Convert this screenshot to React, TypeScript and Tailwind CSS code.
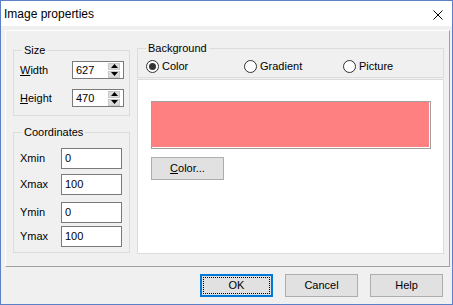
import React from "react";

function cn(...parts: Array<string | false | undefined | null>) {
  return parts.filter(Boolean).join(" ");
}

function Spin() {
  return (
    <div className="flex flex-col gap-[1px] mr-[3px]">
      <div className="w-[12px] h-[7px] bg-[#dcdcdc] border border-[#c8c8c8] flex items-center justify-center">
        <svg width="7" height="4" viewBox="0 0 7 4">
          <path d="M3.5 0 L7 4 L0 4 Z" fill="#000" />
        </svg>
      </div>
      <div className="w-[12px] h-[7px] bg-[#dcdcdc] border border-[#c8c8c8] flex items-center justify-center">
        <svg width="7" height="4" viewBox="0 0 7 4">
          <path d="M0 0 L7 0 L3.5 4 Z" fill="#000" />
        </svg>
      </div>
    </div>
  );
}

function Field({ value, w, h, spin }: { value: string; w: string; h: string; spin?: boolean }) {
  return (
    <div className={cn("flex items-center bg-white border border-[#7a7a7a]", w, h)}>
      <span className="flex-1 pl-[3px] leading-none">{value}</span>
      {spin && <Spin />}
    </div>
  );
}

function Radio({ label, checked, w }: { label: string; checked?: boolean; w: string }) {
  return (
    <div className={cn("flex items-center gap-[3px]", w)}>
      <div className="w-[13px] h-[13px] rounded-full border border-[#333] bg-white flex items-center justify-center">
        {checked && <div className="w-[7px] h-[7px] rounded-full bg-[#333]" />}
      </div>
      <span>{label}</span>
    </div>
  );
}

function Button({ children, focused }: { children: React.ReactNode; focused?: boolean }) {
  return (
    <div
      className={cn(
        "w-[73px] h-[23px] bg-[#e1e1e1] flex",
        focused ? "border-2 border-[#0078d7]" : "border border-[#adadad]",
      )}
    >
      <div
        className={cn(
          "flex-1 flex items-center justify-center",
          focused && "m-[1px] border border-dotted border-black",
        )}
      >
        {children}
      </div>
    </div>
  );
}

export default function App() {
  return (
    <div className="w-[453px] h-[305px] border border-[#5b80c8] bg-[#f0f0f0] flex flex-col font-['Liberation_Sans',Arial,sans-serif] text-[11px] text-black">
      {/* title bar */}
      <div className="h-[25px] bg-white flex items-center justify-between pl-[3px] pr-[9px]">
        <span className="text-[12px]">Image properties</span>
        <svg width="10" height="10" viewBox="0 0 10 10" className="mt-[2px]">
          <path d="M0.5 0.5 L9.5 9.5 M9.5 0.5 L0.5 9.5" stroke="#000" strokeWidth="1" />
        </svg>
      </div>

      {/* main panel */}
      <div className="mt-[4px] ml-[4px] w-[445px] h-[237px] border border-t-white border-l-white border-r-[#a0a0a0] border-b-[#a0a0a0] flex">
        {/* left column */}
        <div className="ml-[7px] pt-[13px] w-[117px] flex flex-col">
          <fieldset className="border border-[#dcdcdc] pb-[8px]">
            <legend className="ml-[8px] px-[2px] leading-[13px]">Size</legend>
            <div className="mt-[4px] pl-[6px] flex items-center">
              <span className="w-[52px]">
                <span className="underline">W</span>idth
              </span>
              <Field value="627" w="w-[52px]" h="h-[18px]" spin />
            </div>
            <div className="mt-[10px] pl-[6px] flex items-center">
              <span className="w-[52px]">
                <span className="underline">H</span>eight
              </span>
              <Field value="470" w="w-[52px]" h="h-[18px]" spin />
            </div>
          </fieldset>

          <fieldset className="mt-[10px] border border-[#dcdcdc] pb-[5px]">
            <legend className="ml-[8px] px-[2px] leading-[13px]">Coordinates</legend>
            {[
              ["Xmin", "0", "mt-[9px]"],
              ["Xmax", "100", "mt-[5px]"],
              ["Ymin", "0", "mt-[7px]"],
              ["Ymax", "100", "mt-[3px]"],
            ].map(([label, value, mt]) => (
              <div key={label} className={cn("pl-[6px] flex items-center", mt)}>
                <span className="w-[41px]">{label}</span>
                <Field value={value} w="w-[61px]" h="h-[21px]" />
              </div>
            ))}
          </fieldset>
        </div>

        {/* right column */}
        <div className="ml-[7px] pt-[11px] w-[307px] flex flex-col">
          <fieldset className="border border-[#dcdcdc]">
            <legend className="ml-[8px] px-[2px] leading-[13px]">Background</legend>
            <div className="h-[22px] pl-[8px] flex items-center">
              <Radio label="Color" checked w="w-[98px]" />
              <Radio label="Gradient" w="w-[99px]" />
              <Radio label="Picture" w="w-[90px]" />
            </div>
          </fieldset>

          <div className="mt-[1px] h-[175px] bg-white border border-[#dcdcdc] pl-[13px] pt-[21px] flex flex-col">
            <div className="w-[280px] h-[48px] bg-[#ff8080] border border-[#a0a0a0] shadow-[inset_-1px_-1px_0_#fff]" />
            <div className="mt-[8px]">
              <Button>
                <span>
                  <span className="underline">C</span>olor...
                </span>
              </Button>
            </div>
          </div>
        </div>
      </div>

      {/* buttons */}
      <div className="mt-[7px] pr-[9px] flex justify-end gap-[12px]">
        <Button focused>OK</Button>
        <Button>Cancel</Button>
        <Button>Help</Button>
      </div>
    </div>
  );
}
